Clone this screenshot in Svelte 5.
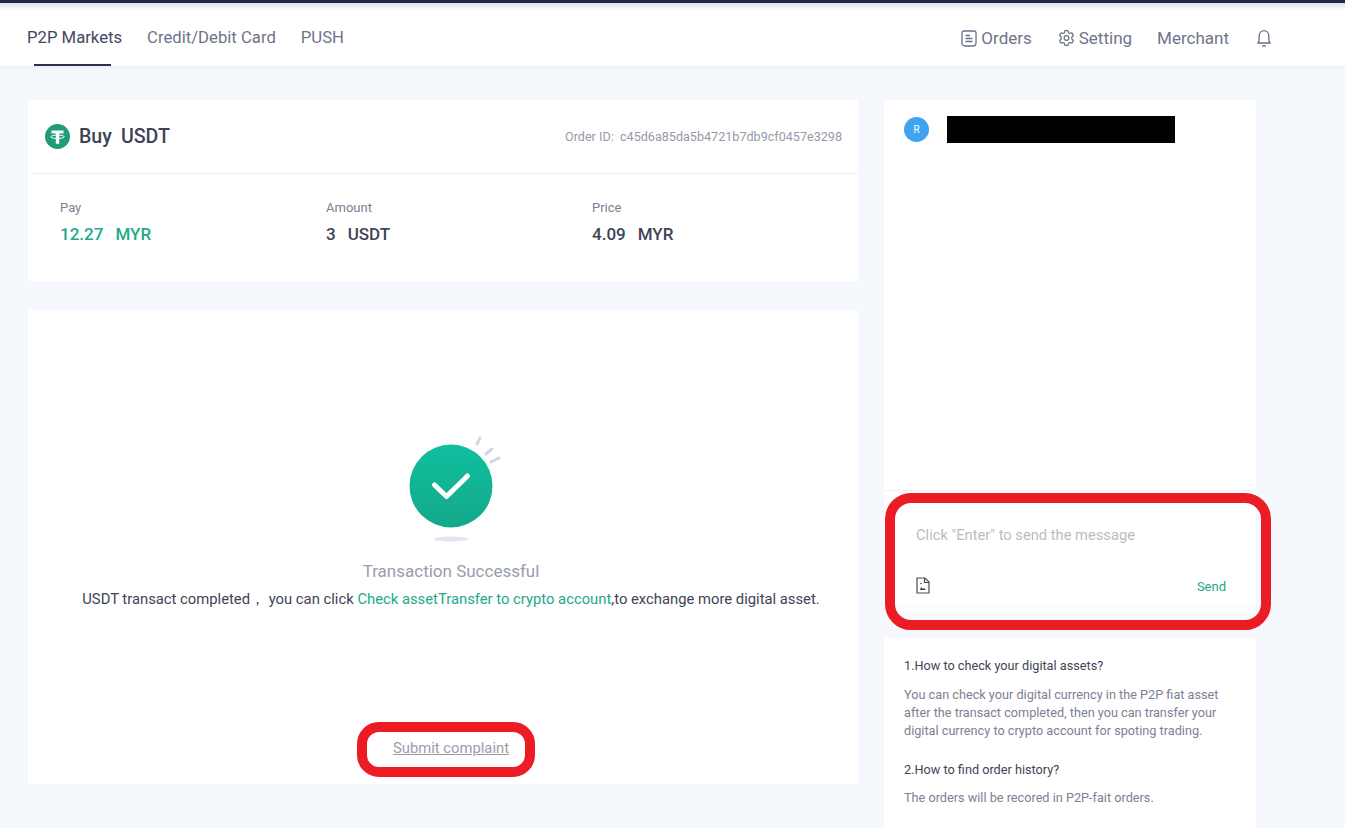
<script lang="ts">
  const stats = [
    { label: 'Pay', value: '12.27', unit: 'MYR', accent: true },
    { label: 'Amount', value: '3', unit: 'USDT', accent: false },
    { label: 'Price', value: '4.09', unit: 'MYR', accent: false }
  ];
</script>

<div class="page">
  <header class="topbar">
    <nav class="tabs">
      <a class="tab active">P2P Markets</a>
      <a class="tab">Credit/Debit Card</a>
      <a class="tab">PUSH</a>
    </nav>
    <div class="actions">
      <a class="action orders">
        <svg width="16" height="17" viewBox="0 0 16 17" fill="none" stroke="#6b7186" stroke-width="1.3">
          <path d="M2.800 1h10.400A1.800 1.800 0 0 1 15 2.800v10.200a3 3 0 0 1-3 3H4a3 3 0 0 1-3-3V2.800A1.800 1.800 0 0 1 2.800 1z" />
          <path d="M4.500 5.500h4.500M4.500 8.500h7M4.500 11.500h7" />
        </svg>
        Orders
      </a>
      <a class="action setting">
        <svg width="17" height="18" viewBox="0 0 24 24" fill="none" stroke="#6b7186" stroke-width="1.700" stroke-linejoin="round">
          <circle cx="12" cy="12" r="3.400" />
          <path d="M9.800 1.500h4.400l.7 3.100 1.700 1 3-.9 2.200 3.700-2.300 2.200v2.800l2.300 2.200-2.200 3.700-3-.9-1.700 1-.7 3.100H9.800l-.7-3.100-1.700-1-3 .9-2.200-3.700 2.300-2.200v-2.800L2.200 8.400l2.200-3.700 3 .9 1.700-1z" />
        </svg>
        Setting
      </a>
      <a class="action merchant">Merchant</a>
      <svg class="bell" width="16" height="18" viewBox="0 0 16 18" fill="none" stroke="#6b7186" stroke-width="1.300" stroke-linejoin="round">
        <path d="M1.800 14c1-1 1.400-2 1.400-3.500V6.500a4.800 4.800 0 0 1 9.600 0v4c0 1.500.4 2.500 1.400 3.500z" />
        <path d="M6 16.800h4" />
      </svg>
    </div>
  </header>

  <main class="content">
    <section class="left">
      <div class="card order">
        <div class="order-head">
          <div class="title">
            <svg width="25" height="25" viewBox="0 0 25 25">
              <circle cx="12.500" cy="12.500" r="12.500" fill="#1f9d78" />
              <path d="M6.500 6.500h12v3h-4.300v10.200h-3.400V9.500H6.500z" fill="#fff" />
              <ellipse cx="12.500" cy="12.800" rx="6.800" ry="1.700" fill="none" stroke="#fff" stroke-width="1" />
            </svg>
            <span>Buy</span><span>USDT</span>
          </div>
          <div class="order-id">Order ID:&nbsp; c45d6a85da5b4721b7db9cf0457e3298</div>
        </div>
        <div class="stats">
          {#each stats as s}
            <div class="stat">
              <div class="stat-label">{s.label}</div>
              <div class="stat-value" class:accent={s.accent}>
                <span>{s.value}</span><span>{s.unit}</span>
              </div>
            </div>
          {/each}
        </div>
      </div>

      <div class="card result">
        <svg class="check" width="94" height="108" viewBox="0 0 94 108">
          <defs>
            <linearGradient id="okfill" x1="0" y1="0" x2="0" y2="1">
              <stop offset="0" stop-color="#0fc09e" />
              <stop offset="1" stop-color="#13a88a" />
            </linearGradient>
          </defs>
          <circle cx="42" cy="51" r="41.500" fill="url(#okfill)" />
          <path d="M25.500 50l12 11.500 21-20.500" fill="none" stroke="#fff" stroke-width="5" stroke-linecap="round" stroke-linejoin="round" />
          <path d="M68 9l3-6M77 19l6-5M82 27l8-4" stroke="#d3d3ea" stroke-width="3" stroke-linecap="round" />
          <ellipse cx="42" cy="104" rx="17" ry="2.500" fill="#e4e4f0" />
        </svg>
        <div class="result-title">Transaction Successful</div>
        <p class="result-text">USDT transact completed， you can click <a>Check asset</a><a>Transfer to crypto account</a>,to exchange more digital asset.</p>
        <a class="complaint">Submit complaint</a>
      </div>
    </section>

    <aside class="right">
      <div class="card chat-head">
        <span class="avatar">R</span>
        <span class="redacted"></span>
      </div>
      <div class="chat-body"></div>
      <div class="composer">
        <div class="placeholder">Click "Enter" to send the message</div>
        <div class="composer-foot">
          <svg width="14" height="17" viewBox="0 0 14 17" fill="none" stroke="#4a4a55" stroke-width="1.200">
            <path d="M1 1h8l4 4v11H1z" />
            <path d="M8.500 1v4.500H13" />
            <path d="M3.500 13l2-3 1.500 2 1-1 2 2z" fill="#4a4a55" stroke="none" />
            <circle cx="5" cy="6.500" r=".8" fill="#4a4a55" stroke="none" />
          </svg>
          <a class="send">Send</a>
        </div>
      </div>
      <div class="card help">
        <h4>1.How to check your digital assets?</h4>
        <p>You can check your digital currency in the P2P fiat asset after the transact completed, then you can transfer your digital currency to crypto account for spoting trading.</p>
        <h4>2.How to find order history?</h4>
        <p class="last">The orders will be recored in P2P-fait orders.</p>
      </div>
    </aside>
  </main>

  <div class="ring ring-complaint"></div>
  <div class="ring ring-composer"></div>
</div>

<style>
  :global(body) {
    margin: 0;
    background: #f5f8fc;
    font-family: Roboto, "Liberation Sans", sans-serif;
  }

  .page {
    position: relative;
    width: 1345px;
    height: 828px;
    overflow: hidden;
    background: #f5f8fc;
    border-top: 3px solid #1e2b42;
    box-sizing: border-box;
  }

  .topbar {
    display: flex;
    justify-content: space-between;
    align-items: stretch;
    height: 63px;
    padding: 7px 0 0 27px;
    box-sizing: border-box;
    background: linear-gradient(#dde1ea 0, #fff 7px);
    box-shadow: 0 1px 4px #e9edf5;
  }

  .tabs {
    display: flex;
    gap: 25px;
  }

  .tab {
    position: relative;
    font-size: 16.700px;
    line-height: 56px;
    color: #6f748a;
  }

  .tab.active {
    color: #43475e;
  }

  .tab.active::after {
    content: '';
    position: absolute;
    left: 7px;
    right: 11px;
    bottom: 0;
    height: 2px;
    background: #2c3050;
  }

  .actions {
    display: flex;
    align-items: center;
    margin-right: 73px;
    font-size: 17px;
    color: #6f748a;
  }

  .action {
    display: flex;
    align-items: center;
    gap: 4px;
    line-height: 56px;
  }

  .orders { margin-right: 26px; }
  .setting { margin-right: 25px; }
  .merchant { margin-right: 27px; }

  .content {
    display: flex;
    gap: 26px;
    padding: 34px 0 0 28px;
  }

  .card {
    background: #fff;
  }

  .left {
    width: 830px;
    display: flex;
    flex-direction: column;
    gap: 29px;
  }

  .order {
    height: 181px;
  }

  .order-head {
    display: flex;
    justify-content: space-between;
    align-items: center;
    height: 73px;
    margin-left: 5px;
    padding: 0 16px 0 12px;
    border-bottom: 1px solid #e9ebee;
    box-sizing: content-box;
  }

  .title {
    display: flex;
    align-items: center;
    margin-top: -1px;
    font-size: 19.600px;
    font-weight: 500;
    color: #3f4356;
  }

  .title span { margin-left: 9px; }

  .order-id {
    font-size: 12.600px;
    color: #9699a8;
  }

  .stats {
    display: grid;
    grid-template-columns: 266px 266px 1fr;
    padding: 26px 0 0 32px;
  }

  .stat-label {
    font-size: 13px;
    line-height: 16px;
    color: #7d8093;
  }

  .stat-value {
    margin-top: 8px;
    font-size: 17px;
    line-height: 20px;
    font-weight: 500;
    color: #3f4356;
  }

  .stat-value span + span { margin-left: 12px; }
  .stat-value.accent { color: #22a98a; }

  .result {
    height: 474px;
    padding-left: 16px;
    box-sizing: border-box;
    display: flex;
    flex-direction: column;
    align-items: center;
  }

  .check {
    margin: 125px 0 0 10px;
  }

  .result-title {
    margin-top: 18px;
    font-size: 17px;
    line-height: 20px;
    color: #9a9dac;
  }

  .result-text {
    margin: 8px 0 0;
    font-size: 14.800px;
    line-height: 20px;
    color: #3f4356;
  }

  .result-text a { color: #22a98a; }

  .complaint {
    margin-top: 129px;
    font-size: 14.800px;
    line-height: 20px;
    color: #9a9dac;
    text-decoration: underline;
  }

  .right {
    width: 372px;
    display: flex;
    flex-direction: column;
  }

  .chat-head {
    display: flex;
    align-items: center;
    height: 59px;
    padding: 0 0 0 20px;
  }

  .avatar {
    width: 25px;
    height: 25px;
    margin-top: -1px;
    border-radius: 50%;
    background: #3fa4f0;
    color: #fff;
    font-size: 10px;
    line-height: 25px;
    text-align: center;
  }

  .redacted {
    width: 228px;
    height: 27px;
    margin-left: 18px;
    background: #000;
  }

  .chat-body {
    height: 331px;
    background: #fff;
    border-bottom: 1px solid #eef0f5;
  }

  .composer {
    height: 140px;
    background: linear-gradient(#fff 78%, #f6f8fb 92%);
    padding: 34px 30px 0 32px;
    box-sizing: border-box;
  }

  .placeholder {
    font-size: 14.700px;
    line-height: 20px;
    color: #bbbcc2;
  }

  .composer-foot {
    display: flex;
    justify-content: space-between;
    align-items: center;
    margin-top: 31px;
  }

  .send {
    margin-top: 3px;
    font-size: 13px;
    color: #22a98a;
  }

  .help {
    margin-top: 7px;
    padding: 19px 20px 0;
    height: 200px;
  }

  .help h4 {
    margin: 0;
    font-size: 12.700px;
    line-height: 18px;
    font-weight: 400;
    color: #3f4356;
  }

  .help p {
    margin: 11px 0 21px;
    font-size: 12.700px;
    line-height: 18px;
    color: #7d8093;
  }

  .help p.last {
    margin-top: 10px;
  }

  .ring {
    position: absolute;
    border: 10px solid #ec1c24;
    background: transparent;
    box-sizing: border-box;
  }

  .ring-complaint {
    left: 357px;
    top: 719px;
    width: 178px;
    height: 55px;
    border-radius: 22px;
  }

  .ring-composer {
    left: 885px;
    top: 490px;
    width: 386px;
    height: 137px;
    border-radius: 26px;
  }
</style>
